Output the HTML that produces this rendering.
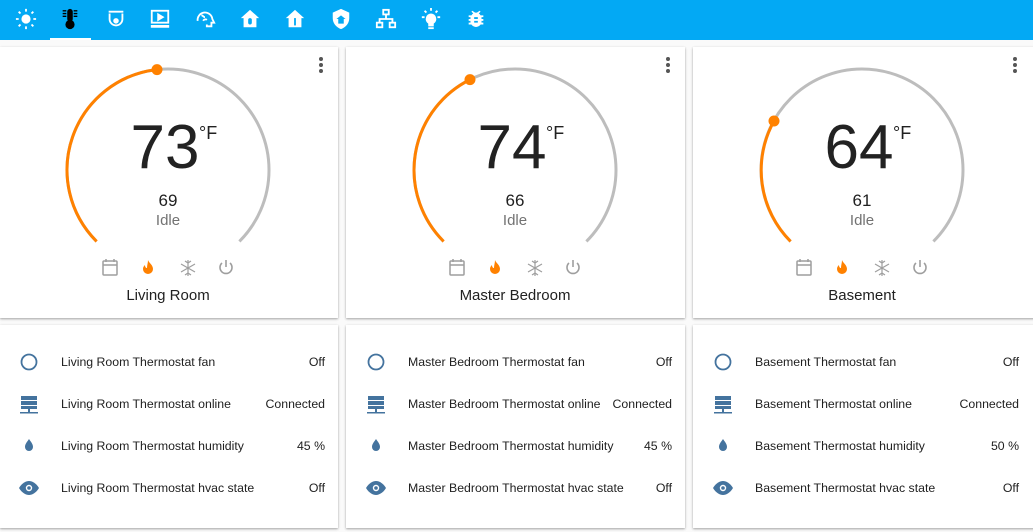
<!DOCTYPE html>
<html><head><meta charset="utf-8"><style>
*{box-sizing:border-box;margin:0;padding:0}
body{width:1033px;height:532px;overflow:hidden;background:#fafafa;font-family:"Liberation Sans",sans-serif;color:#212121;position:relative}
.hdr{position:absolute;left:0;top:0;width:1033px;height:40px;background:#03a9f4}
.hdr svg{position:absolute;top:8px}
.sel{position:absolute;left:50px;top:38px;width:41px;height:2px;background:#fff}
.card{position:absolute;background:#fff;box-shadow:0 1px 2px rgba(0,0,0,.25),0 1px 3px rgba(0,0,0,.12)}
.t{position:absolute;text-align:center;width:200px}
.big{font-size:62px;top:112px;color:#222}
.deg{position:absolute;font-size:18px;top:123px}
.cur{font-size:17px;top:191px}
.idle{font-size:15px;top:212px;color:#727272}
.name{font-size:15px;top:287px}
.dots{position:absolute;top:57px;width:4px}
.dots i{display:block;width:4px;height:4px;border-radius:2px;background:#555;margin-bottom:2px}
.row{position:absolute;font-size:12.3px;height:20px;line-height:20px}
.row .v{position:absolute;right:0;top:0}
</style></head><body>
<div class="hdr">
<svg style="left:15px" width="22" height="22" viewBox="0 0 24 24" fill="#fff"><circle cx="12" cy="12" r="5"/><g stroke="#fff" stroke-width="2"><path d="M12 1v3M12 20v3M1 12h3M20 12h3M4 4l2 2M18 18l2 2M4 20l2-2M18 6l2-2"/></g></svg>
<svg style="left:59px" width="22" height="22" viewBox="0 0 24 24"><rect x="9" y="1" width="6" height="14" rx="3" fill="#000"/><circle cx="12" cy="18" r="5" fill="#000"/><path d="M4 3h4M4 6h4M4 9h4M16 3h4M16 6h4M16 9h4" stroke="#000" stroke-width="1.5"/></svg>
<svg style="left:105px" width="22" height="22" viewBox="0 0 24 24" fill="none" stroke="#fff" stroke-width="2"><path d="M4 4h16M5 6v6a7 7 0 0014 0V6"/><circle cx="12" cy="14" r="2" fill="#fff"/></svg>
<svg style="left:149px" width="22" height="22" viewBox="0 0 24 24" fill="none" stroke="#fff" stroke-width="2"><rect x="3" y="3" width="18" height="13"/><path d="M10 7l5 3-5 3z" fill="#fff"/><path d="M2 20h20" stroke-width="3"/></svg>
<svg style="left:194px" width="22" height="22" viewBox="0 0 24 24" fill="none" stroke="#fff" stroke-width="2"><path d="M4 14a8 8 0 1116 -2l2 4h-3v4h-5v-2"/><path d="M8 8c2 0 2 2 4 2M10 14c1-2 3-2 4-1"/></svg>
<svg style="left:239px" width="22" height="22" viewBox="0 0 24 24" fill="#fff"><path d="M12 2L2 11h3v10h14V11h3z"/><rect x="10" y="11" width="4" height="7" rx="2" fill="#03a9f4"/></svg>
<svg style="left:284px" width="22" height="22" viewBox="0 0 24 24" fill="#fff"><path d="M12 2L2 11h3v10h14V11h3z"/><path d="M11 11h2v8h-2z" fill="#03a9f4"/></svg>
<svg style="left:330px" width="22" height="22" viewBox="0 0 24 24" fill="#fff"><path d="M12 1L3 5v6c0 6 4 10 9 12 5-2 9-6 9-12V5z"/><path d="M12 8l-5 4h2v5h6v-5h2z" fill="#03a9f4"/></svg>
<svg style="left:375px" width="22" height="22" viewBox="0 0 24 24" fill="none" stroke="#fff" stroke-width="2"><rect x="9" y="2" width="6" height="5"/><rect x="2" y="16" width="6" height="5"/><rect x="16" y="16" width="6" height="5"/><path d="M12 7v5M5 16v-4h14v4"/></svg>
<svg style="left:420px" width="22" height="22" viewBox="0 0 24 24" fill="#fff"><path d="M12 6a6 6 0 00-3 11v3h6v-3a6 6 0 00-3-11z"/><rect x="9" y="21" width="6" height="2"/><path d="M12 0v3M2 10h3M19 10h3M5 3l2 2M19 3l-2 2" stroke="#fff" stroke-width="2"/></svg>
<svg style="left:465px" width="22" height="22" viewBox="0 0 24 24" fill="#fff"><path d="M20 8h-3a6 6 0 00-2-2l2-2-1-1-3 2h-2L8 3 7 4l2 2a6 6 0 00-2 2H4v2h2v2H4v2h2v2H4v2h3a6 6 0 0010 0h3v-2h-2v-2h2v-2h-2v-2h2z"/><path d="M10 10h4v2h-4zM10 14h4v2h-4z" fill="#03a9f4"/></svg>
<div class="sel"></div>
</div>

<div class="card" style="left:0;top:47px;width:338px;height:271px"></div>
<div class="card" style="left:346px;top:47px;width:339px;height:271px"></div>
<div class="card" style="left:693px;top:47px;width:345px;height:271px"></div>
<svg style="position:absolute;left:0;top:0" width="1033" height="320" fill="none" stroke-width="3">
<path d="M96.6 241.4 A101 101 0 1 1 239.4 241.4" stroke="#bdbdbd"/>
<path d="M96.6 241.4 A101 101 0 0 1 157 69.6" stroke="#ff8100"/>
<circle cx="157" cy="69.6" r="5.5" fill="#ff8100" stroke="none"/>
<path d="M443.6 241.4 A101 101 0 1 1 586.4 241.4" stroke="#bdbdbd"/>
<path d="M443.6 241.4 A101 101 0 0 1 470 79.6" stroke="#ff8100"/>
<circle cx="470" cy="79.6" r="5.5" fill="#ff8100" stroke="none"/>
<path d="M790.6 241.4 A101 101 0 1 1 933.4 241.4" stroke="#bdbdbd"/>
<path d="M790.6 241.4 A101 101 0 0 1 774 121" stroke="#ff8100"/>
<circle cx="774" cy="121" r="5.5" fill="#ff8100" stroke="none"/>
<g id="ic" stroke-width="1.5">
<g stroke="#9e9e9e"><rect x="103" y="261" width="14" height="14" rx="1"/><path d="M103 265h14M106 259v3M114 259v3"/></g>
<path d="M148 260c1 3 5 5 5 9a5 5 0 01-10 0c0-2 1-3 2-4 0 2 1 3 2 3 0-3 1-5 1-8z" fill="#ff8100" stroke="none"/>
<g stroke="#9e9e9e" stroke-width="1.2"><path d="M188 260v16M181 264l14 8M181 272l14-8M185 261l3 2 3-2M185 275l3-2 3 2"/></g>
<g stroke="#9e9e9e" stroke-width="1.6"><path d="M226 260v7"/><path d="M222 263a6 6 0 108 0"/></g>
</g>
<use href="#ic" x="347"/>
<use href="#ic" x="694"/>
</svg>

<div class="t big" style="left:65px">73</div><div class="deg" style="left:199px">°F</div>
<div class="t cur" style="left:68px">69</div><div class="t idle" style="left:68px">Idle</div>
<div class="t name" style="left:68px">Living Room</div>
<div class="dots" style="left:319px"><i></i><i></i><i></i></div>

<div class="t big" style="left:412px">74</div><div class="deg" style="left:546px">°F</div>
<div class="t cur" style="left:415px">66</div><div class="t idle" style="left:415px">Idle</div>
<div class="t name" style="left:415px">Master Bedroom</div>
<div class="dots" style="left:666px"><i></i><i></i><i></i></div>

<div class="t big" style="left:759px">64</div><div class="deg" style="left:893px">°F</div>
<div class="t cur" style="left:762px">61</div><div class="t idle" style="left:762px">Idle</div>
<div class="t name" style="left:762px">Basement</div>
<div class="dots" style="left:1013px"><i></i><i></i><i></i></div>

<div class="card" style="left:0;top:325px;width:338px;height:203px"></div>
<div class="card" style="left:346px;top:325px;width:339px;height:203px"></div>
<div class="card" style="left:693px;top:325px;width:345px;height:203px"></div>

<svg style="position:absolute;left:0;top:340px" width="1033" height="170">
<g id="ri" fill="#44739e">
<circle cx="29" cy="22" r="7.5" fill="none" stroke="#44739e" stroke-width="1.8"/>
<rect x="21" y="56" width="16" height="4"/><rect x="21" y="61" width="16" height="4"/><rect x="21" y="66" width="16" height="3"/><rect x="28" y="69" width="2" height="3"/><rect x="20" y="72" width="18" height="1.5"/>
<path d="M29 99c2 3 4 5 4 8a4 4 0 01-8 0c0-3 2-5 4-8z"/>
<path d="M19 148c3-5 7-7 10-7s7 2 10 7c-3 5-7 7-10 7s-7-2-10-7z"/><circle cx="29" cy="148" r="3.2" fill="#fff"/><circle cx="29" cy="148" r="1.8"/>
</g>
<use href="#ri" x="347"/>
<use href="#ri" x="694"/>
</svg>

<div class="row" style="left:61px;top:352px;width:264px">Living Room Thermostat fan<span class="v">Off</span></div>
<div class="row" style="left:61px;top:394px;width:264px">Living Room Thermostat online<span class="v">Connected</span></div>
<div class="row" style="left:61px;top:436px;width:264px">Living Room Thermostat humidity<span class="v">45 %</span></div>
<div class="row" style="left:61px;top:478px;width:264px">Living Room Thermostat hvac state<span class="v">Off</span></div>

<div class="row" style="left:408px;top:352px;width:264px">Master Bedroom Thermostat fan<span class="v">Off</span></div>
<div class="row" style="left:408px;top:394px;width:264px">Master Bedroom Thermostat online<span class="v">Connected</span></div>
<div class="row" style="left:408px;top:436px;width:264px">Master Bedroom Thermostat humidity<span class="v">45 %</span></div>
<div class="row" style="left:408px;top:478px;width:264px">Master Bedroom Thermostat hvac state<span class="v">Off</span></div>

<div class="row" style="left:755px;top:352px;width:264px">Basement Thermostat fan<span class="v">Off</span></div>
<div class="row" style="left:755px;top:394px;width:264px">Basement Thermostat online<span class="v">Connected</span></div>
<div class="row" style="left:755px;top:436px;width:264px">Basement Thermostat humidity<span class="v">50 %</span></div>
<div class="row" style="left:755px;top:478px;width:264px">Basement Thermostat hvac state<span class="v">Off</span></div>
</body></html>
